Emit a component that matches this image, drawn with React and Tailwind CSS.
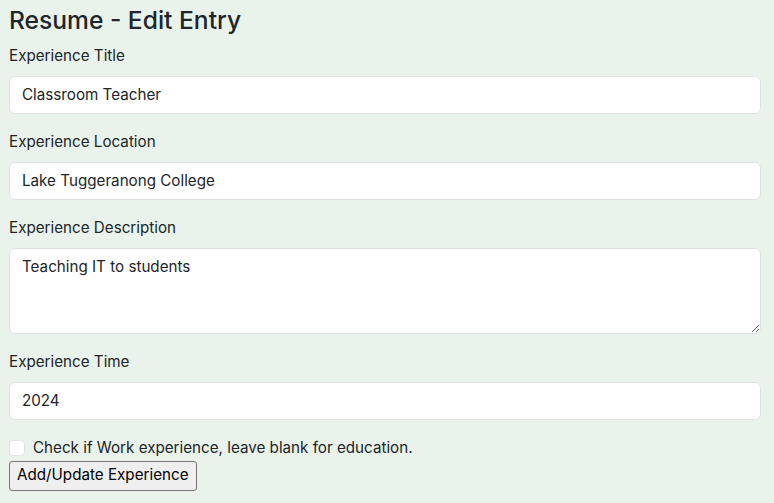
export default function App() {
  return (
    <div
      className="min-h-screen bg-[#e9f3eb] pl-[9px] pr-[13px] text-[#212529]"
      style={{ fontFamily: 'Inter, "Liberation Sans", sans-serif' }}
    >
      <h4 className="pt-[6px] text-[24.6px] leading-[1.2] font-medium mb-[8px]">Resume - Edit Entry</h4>
      <form>
        <div className="mb-4">
          <label className="block mb-2 text-[15.2px] leading-6">Experience Title</label>
          <input
            type="text"
            defaultValue="Classroom Teacher"
            className="block w-full h-[38px] px-3 py-1.5 text-[15.2px] bg-white border border-[#dee2e6] rounded-md"
          />
        </div>
        <div className="mb-4">
          <label className="block mb-2 text-[15.2px] leading-6">Experience Location</label>
          <input
            type="text"
            defaultValue="Lake Tuggeranong College"
            className="block w-full h-[38px] px-3 py-1.5 text-[15.2px] bg-white border border-[#dee2e6] rounded-md"
          />
        </div>
        <div className="mb-4">
          <label className="block mb-2 text-[15.2px] leading-6">Experience Description</label>
          <textarea
            rows="3"
            defaultValue="Teaching IT to students"
            className="block w-full h-[86px] px-3 py-1.5 text-[15.2px] leading-6 bg-white border border-[#dee2e6] rounded-md"
          />
        </div>
        <div className="mb-4">
          <label className="block mb-2 text-[15.2px] leading-6">Experience Time</label>
          <input
            type="text"
            defaultValue="2024"
            className="block w-full h-[38px] px-3 py-1.5 text-[15.2px] bg-white border border-[#dee2e6] rounded-md"
          />
        </div>
        <div className="flex items-center gap-2 mt-[1px]">
          <span className="w-4 h-4 bg-white border border-[#dee2e6] rounded"></span>
          <span className="text-[15.2px] leading-6">Check if Work experience, leave blank for education.</span>
        </div>
        <button
          type="button"
          className="mt-[1px] h-[30px] px-[7px] text-[15.2px] text-black bg-[#efefef] border border-[#767676] rounded-[3px]"
        >
          Add/Update Experience
        </button>
      </form>
    </div>
  );
}
